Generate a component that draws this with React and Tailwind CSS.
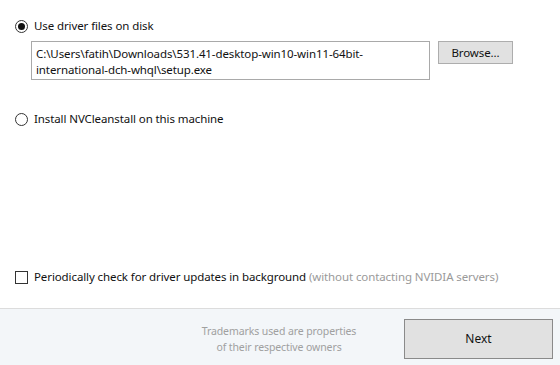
import React, { useState } from "react";

const font = { fontFamily: '"Noto Sans", "Open Sans", sans-serif' };

const Radio = ({ checked, onClick, children }) => (
  <button onClick={onClick} className="flex items-center gap-[6px] text-left">
    <span className="w-[13px] h-[13px] rounded-full border border-[#333] flex items-center justify-center bg-white">
      {checked && <span className="w-[7px] h-[7px] rounded-full bg-[#111]" />}
    </span>
    <span className="text-[11.5px] tracking-[-0.1px] text-[#111] leading-[16px]">{children}</span>
  </button>
);

const App = () => {
  const [mode, setMode] = useState("disk");
  const [periodic, setPeriodic] = useState(false);

  return (
    <main className="w-[560px] h-[365px] flex flex-col bg-white overflow-hidden" style={font}>
      {/* OPTIONS */}
      <section className="h-[308px] flex flex-col pl-[15px] pt-[18px]">
        <Radio checked={mode === "disk"} onClick={() => setMode("disk")}>
          Use driver files on disk
        </Radio>

        <div className="flex items-start gap-[8px] mt-[7px] ml-[16px]">
          <div className="w-[399px] h-[39px] border border-[#a9a9a9] px-[4px] pt-[4px] text-[11.5px] tracking-[-0.1px] leading-[16px] text-[#111]">
            C:\Users\fatih\Downloads\531.41-desktop-win10-win11-64bit-
            <br />
            international-dch-whql\setup.exe
          </div>
          <button className="w-[75px] h-[23px] border border-[#adadad] bg-[#e1e1e1] text-[11.5px] tracking-[-0.1px] text-[#111]">
            Browse...
          </button>
        </div>

        <div className="mt-[31px]">
          <Radio checked={mode === "install"} onClick={() => setMode("install")}>
            Install NVCleanstall on this machine
          </Radio>
        </div>

        <button
          onClick={() => setPeriodic(!periodic)}
          className="flex items-center gap-[6px] mt-auto mb-[23px] text-left"
        >
          <span className="w-[13px] h-[13px] border border-[#333] bg-white flex items-center justify-center text-[10px] leading-none">
            {periodic ? "✓" : ""}
          </span>
          <span className="text-[11.5px] tracking-[-0.1px] leading-[16px] text-[#111]">
            Periodically check for driver updates in background{" "}
            <span className="text-[#9a9a9a]">(without contacting NVIDIA servers)</span>
          </span>
        </button>
      </section>

      {/* FOOTER */}
      <footer className="flex-1 border-t border-[#dcdcdc] bg-[#f3f6f9] flex items-start justify-end pt-[10px] pr-[7px]">
        <div className="w-[250px] text-center text-[10.5px] tracking-[-0.1px] leading-[16px] text-[#a0a0a0] pt-[4px]">
          Trademarks used are properties
          <br />
          of their respective owners
        </div>
        <button className="w-[149px] h-[40px] border border-[#8a8a8a] bg-[#e1e1e1] text-[12px] text-[#111]">
          Next
        </button>
      </footer>
    </main>
  );
};

export default App;
